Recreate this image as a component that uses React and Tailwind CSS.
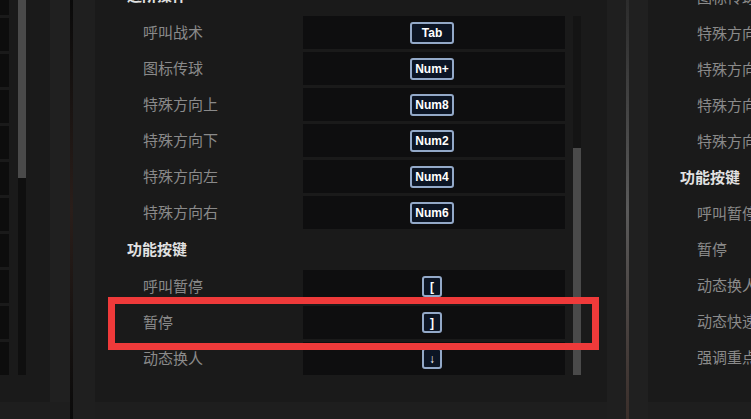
import React from 'react';

const cn = '"Noto Sans CJK SC", "Noto Sans", sans-serif';

const advanced = [
  { label: '呼叫战术', key: 'Tab' },
  { label: '图标传球', key: 'Num+' },
  { label: '特殊方向上', key: 'Num8' },
  { label: '特殊方向下', key: 'Num2' },
  { label: '特殊方向左', key: 'Num4' },
  { label: '特殊方向右', key: 'Num6' },
];

const functionKeys = [
  { label: '呼叫暂停', key: '[' },
  { label: '暂停', key: ']' },
  { label: '动态换人', key: '↓' },
];

const rightItems = [
  { label: '图标传球' },
  { label: '特殊方向上' },
  { label: '特殊方向下' },
  { label: '特殊方向左' },
  { label: '特殊方向右' },
  { label: '功能按键', header: true },
  { label: '呼叫暂停' },
  { label: '暂停' },
  { label: '动态换人' },
  { label: '动态快速换人' },
  { label: '强调重点' },
];

const KeyBadge = ({ k }) => {
  const wide = k.length > 1;
  return (
    <div
      className={`flex items-center justify-center rounded-[3px] border-2 border-[#93a9c8] bg-[#0c1524] text-white font-bold leading-none ${
        wide ? 'w-[44px] h-[22px] text-[12px]' : 'w-[20px] h-[21px] text-[12px]'
      }`}
      style={{ fontFamily: '"Liberation Sans", Arial, sans-serif' }}
    >
      {k}
    </div>
  );
};

const KeyRow = ({ label, k }) => (
  <div className="flex h-[33px]">
    <div className="w-[208px] shrink-0 flex items-center pl-[48px] text-[15px] text-[#8a8a8a]" style={{ fontFamily: cn }}>
      {label}
    </div>
    <div className="w-[262px] shrink-0 bg-[#0e0e0f] flex items-center justify-center pr-[4px]">
      <KeyBadge k={k} />
    </div>
  </div>
);

const SectionHeader = ({ children }) => (
  <div className="h-[41px] flex items-center pl-[32px] text-[15px] font-bold text-[#e2e2e2]" style={{ fontFamily: cn }}>
    {children}
  </div>
);

const App = () => {
  return (
    <div className="relative w-[751px] h-[419px] overflow-hidden bg-[#1e1e1e] flex">
      {/* left panel */}
      <div className="w-[70px] shrink-0 h-full flex flex-col">
        <div className="h-[402px] flex bg-[#1a1a1a]">
          <div className="w-[9px] flex flex-col gap-[3px] mt-[-18px]">
            {Array.from({ length: 11 }).map((_, i) => (
              <div key={i} className="h-[33px] bg-[#0d0d0d]" />
            ))}
          </div>
          <div className="w-[9px]" />
          <div className="w-[8px] flex flex-col pb-[27px]">
            <div className="h-[178px] bg-[#4a4a4a]" />
            <div className="flex-1 bg-[#0f0f0f]" />
          </div>
          <div className="w-[24px]" />
          <div className="flex-1 bg-[#202020]" />
        </div>
      </div>

      {/* divider */}
      <div className="w-[3px] shrink-0 h-full bg-gradient-to-b from-[#0a0a0a] via-[#2a1e1a] to-[#0a0a0a]" />
      <div className="w-[22px] shrink-0 h-full bg-[#1f1f1f]" />

      {/* center panel */}
      <div className="w-[512px] shrink-0 h-full flex flex-col">
        <div className="h-[402px] bg-[#1a1a1a] flex overflow-hidden">
          <div className="flex flex-col mt-[-25px]">
            <SectionHeader>进阶操作</SectionHeader>
            <div className="flex flex-col gap-[3px]">
              {advanced.map((r) => (
                <KeyRow key={r.label} label={r.label} k={r.key} />
              ))}
            </div>
            <SectionHeader>功能按键</SectionHeader>
            <div className="flex flex-col gap-[3px]">
              {functionKeys.map((r) => (
                <KeyRow key={r.label} label={r.label} k={r.key} />
              ))}
            </div>
          </div>
          <div className="w-[8px] shrink-0 ml-[8px] flex flex-col pt-[16px] pb-[27px]">
            <div className="h-[132px] bg-[#141414]" />
            <div className="flex-1 bg-[#4a4a4a]" />
          </div>
        </div>
      </div>

      {/* gap with divider line */}
      <div className="w-[19px] shrink-0 h-full bg-[#1f1f1f]" />
      <div className="w-[3px] shrink-0 h-full bg-gradient-to-b from-[#2c2c2c] via-[#5a5a5a] to-[#3a2e2a]" />
      <div className="w-[19px] shrink-0 h-full bg-[#202020]" />

      {/* right panel */}
      <div className="flex-1 min-w-0 h-full flex flex-col">
        <div className="h-[402px] bg-[#1a1a1a] overflow-hidden">
          <div className="flex flex-col mt-[-21px] whitespace-nowrap">
            {rightItems.map((r) => (
              <div
                key={r.label}
                className={`h-[36px] flex items-center text-[15px] ${
                  r.header ? 'pl-[32px] font-bold text-[#e2e2e2]' : 'pl-[49px] text-[#8a8a8a]'
                }`}
                style={{ fontFamily: cn }}
              >
                {r.label}
              </div>
            ))}
          </div>
        </div>
      </div>

      {/* highlight box */}
      <div className="absolute left-[108px] top-[297px] w-[491px] h-[53px] border-[7px] border-[#ef3a3a]" />
    </div>
  );
};

export default App;
